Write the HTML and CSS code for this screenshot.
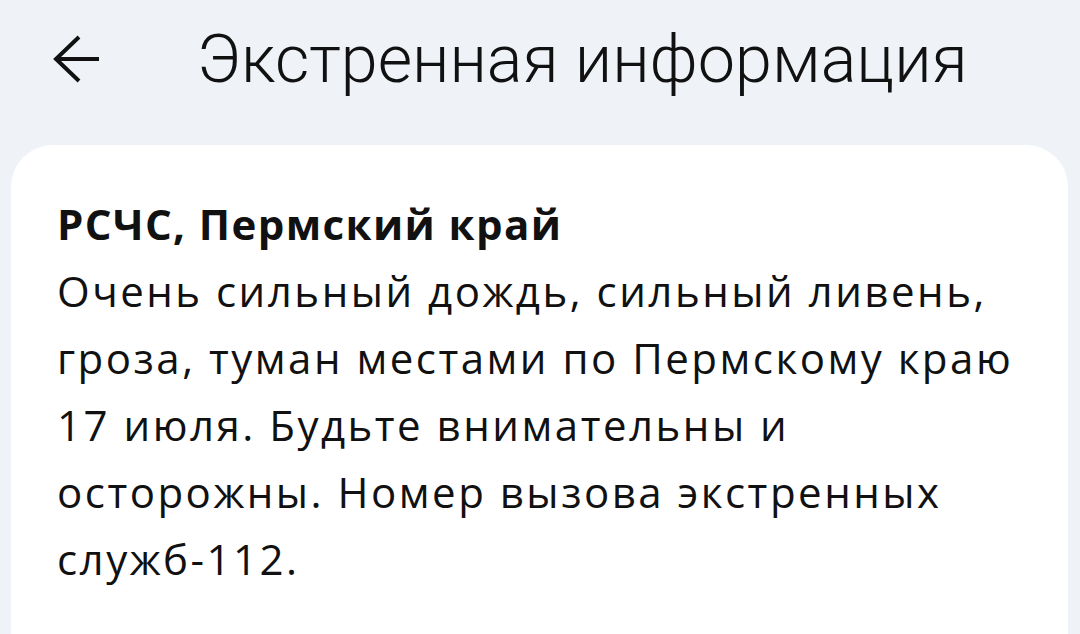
FILE: index.html
```html
<!DOCTYPE html>
<html lang="ru">
<head>
    <meta charset="UTF-8">
    <meta name="viewport" content="width=device-width, initial-scale=1.0">
    <title>Экстренная информация</title>
    <link rel="stylesheet" href="styles.css">
</head>
<body>

<!-- Верхняя панель -->
<div class="top-bar">
    <button class="back-btn" aria-label="Назад">
        <svg width="48" height="48" viewBox="0 0 48 48" fill="none" stroke="#111" stroke-width="4">
            <path d="M2 24H46"/>
            <path d="M26 2L3 24L26 46"/>
        </svg>
    </button>
    <h1 class="page-title">Экстренная информация</h1>
</div>

<!-- Карточка сообщения -->
<div class="alert-card">
    <div class="alert-source">РСЧС, Пермский край</div>
    <div class="alert-text">Очень сильный дождь, сильный ливень, гроза, туман местами по Пермскому краю 17 июля. Будьте внимательны и осторожны. Номер вызова экстренных служб-112.</div>
</div>

</body>
</html>
```

FILE: styles.css
```css
body {
    margin: 0;
    padding: 0;
    background-color: #eff3f8;
    font-family: "Open Sans", "Noto Sans", sans-serif;
    color: #111;
    overflow: hidden;
    height: 634px;
}

.top-bar {
    display: flex;
    align-items: center;
    height: 118px;
    padding-left: 53px;
}

.back-btn {
    display: flex;
    padding: 0;
    border: none;
    background: none;
    cursor: pointer;
}

.page-title {
    margin: 0 0 0 96px;
    font-family: Roboto, "Noto Sans", sans-serif;
    font-weight: 300;
    font-size: 66.5px;
    color: #111;
}

.alert-card {
    margin: 27px 12px 0 11px;
    padding: 45px 46px;
    background-color: #fff;
    border-radius: 42px;
    min-height: 600px;
}

.alert-source {
    font-weight: 700;
    font-size: 42px;
    line-height: 67px;
    letter-spacing: 1.4px;
}

.alert-text {
    font-size: 42px;
    line-height: 67px;
    letter-spacing: 2.5px;
}
```
